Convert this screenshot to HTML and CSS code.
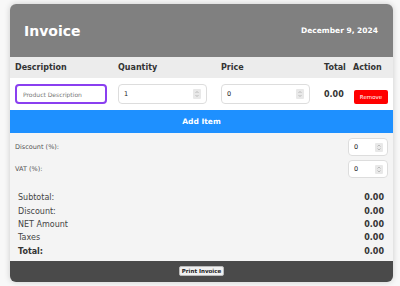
FILE: index.html
```
<!DOCTYPE html>
<html lang="en">
<head>
    <meta charset="UTF-8">
    <meta name="viewport" content="width=device-width, initial-scale=1.0">
    <title>Invoice</title>
    <link rel="stylesheet" href="styles.css">
</head>
<body>
    <div class="invoice">
        <div class="invoice-header">
            <h1>Invoice</h1>
            <div class="date">December 9, 2024</div>
        </div>

        <table class="items">
            <colgroup>
                <col class="col-desc">
                <col class="col-qty">
                <col class="col-price">
                <col class="col-total">
                <col class="col-action">
            </colgroup>
            <thead>
                <tr>
                    <th>Description</th>
                    <th>Quantity</th>
                    <th>Price</th>
                    <th class="num">Total</th>
                    <th>Action</th>
                </tr>
            </thead>
            <tbody>
                <tr>
                    <td><input type="text" class="desc-input" placeholder="Product Description"></td>
                    <td>
                        <span class="spin-wrap">
                            <input type="number" class="num-input" value="1" min="1">
                            <span class="spin"><svg viewBox="0 0 8 10"><path d="M2.5 4 4 2.5 5.5 4M2.5 6 4 7.5 5.5 6"/></svg></span>
                        </span>
                    </td>
                    <td>
                        <span class="spin-wrap">
                            <input type="number" class="num-input" value="0" min="0">
                            <span class="spin"><svg viewBox="0 0 8 10"><path d="M2.5 4 4 2.5 5.5 4M2.5 6 4 7.5 5.5 6"/></svg></span>
                        </span>
                    </td>
                    <td class="num line-total">0.00</td>
                    <td><button class="remove">Remove</button></td>
                </tr>
            </tbody>
        </table>

        <button class="add-item">Add Item</button>

        <div class="rates">
            <div class="rate">
                <label for="discount">Discount (%):</label>
                <span class="spin-wrap">
                    <input type="number" id="discount" class="rate-input" value="0">
                    <span class="spin small"><svg viewBox="0 0 8 9"><path d="M2.5 3.5 4 2 5.5 3.5M2.5 5.5 4 7 5.5 5.5"/></svg></span>
                </span>
            </div>
            <div class="rate">
                <label for="vat">VAT (%):</label>
                <span class="spin-wrap">
                    <input type="number" id="vat" class="rate-input" value="0">
                    <span class="spin small"><svg viewBox="0 0 8 9"><path d="M2.5 3.5 4 2 5.5 3.5M2.5 5.5 4 7 5.5 5.5"/></svg></span>
                </span>
            </div>
        </div>

        <div class="summary">
            <div class="summary-row"><span>Subtotal:</span><b>0.00</b></div>
            <div class="summary-row"><span>Discount:</span><b>0.00</b></div>
            <div class="summary-row"><span>NET Amount</span><b>0.00</b></div>
            <div class="summary-row"><span>Taxes</span><b>0.00</b></div>
            <div class="summary-row total"><span>Total:</span><b>0.00</b></div>
        </div>

        <div class="invoice-footer">
            <button class="print" onclick="window.print()">Print Invoice</button>
        </div>
    </div>
</body>
</html>
```

FILE: styles.css
```
* {margin: 0; padding: 0; box-sizing: border-box;}
body {
    font-family: "DejaVu Sans", Verdana, sans-serif;
    background: #f8f8f8;
    padding: 4px 7px 4px 10px;
    color: #333;
}
.invoice {
    width: 383px;
    background: #f4f4f4;
    border-radius: 6px;
    box-shadow: 0 0 6px rgba(0,0,0,0.18);
    overflow: hidden;
}
.invoice-header {
    background: #808080;
    color: white;
    height: 53px;
    padding: 0 15px 0 14px;
    display: flex;
    align-items: center;
    justify-content: space-between;
}
.invoice-header h1 {font-size: 14px; font-weight: bold; margin-top: 1px;}
.date {font-size: 7.5px; font-weight: bold;}

.items {width: 100%; border-collapse: collapse; table-layout: fixed;}
.col-desc, .col-qty, .col-price {width: 103px;}
.col-total {width: 29px;}
.col-action {width: 45px;}
.items th {
    background: #ececec;
    height: 21px;
    padding: 0 5px;
    font-size: 8px;
    text-align: left;
    color: #333;
}
.items td {background: white; height: 32px; padding: 0 5px;}
.items .num {text-align: right;}
.line-total {font-size: 8px; font-weight: bold;}
input {font-family: inherit; color: #222;}
input[type="number"] {-moz-appearance: textfield;}
input::-webkit-inner-spin-button, input::-webkit-outer-spin-button {-webkit-appearance: none; margin: 0;}
.spin-wrap {position: relative; display: inline-block; vertical-align: middle;}
.spin {
    position: absolute;
    right: 6px;
    top: 5px;
    width: 8px;
    height: 10px;
    background: #e8e8e8;
    border-radius: 1px;
}
.spin.small {top: 5px; right: 5px; height: 9px;}
.spin svg {display: block; width: 100%; height: 100%; fill: none; stroke: #9a9a9a; stroke-width: 0.6;}
.desc-input {
    width: 92px;
    height: 20px;
    border: 2px solid #8a3ff0;
    border-radius: 4px;
    padding: 0 6px;
    font-size: 6px;
    outline: none;
    vertical-align: middle;
}
.desc-input::placeholder {color: #777;}
.num-input {
    display: block;
    width: 89px;
    height: 20px;
    border: 1px solid #ddd;
    border-radius: 4px;
    padding: 0 16px 0 5px;
    font-size: 6.5px;
}
.remove {
    background: #ff0000;
    color: white;
    border: none;
    border-radius: 2px;
    width: 34px;
    height: 14px;
    margin-left: 1px;
    font-family: inherit;
    font-size: 5.5px;
    cursor: pointer;
}
.add-item {
    display: block;
    width: 100%;
    height: 23px;
    background: #1e90ff;
    color: white;
    border: none;
    font-family: inherit;
    font-size: 7.5px;
    font-weight: bold;
    cursor: pointer;
}
.rates {padding: 5px; display: flex; flex-direction: column; gap: 4px;}
.rate {display: flex; justify-content: space-between; align-items: center;}
.rate label {font-size: 6.5px; color: #555;}
.rate-input {
    display: block;
    width: 40px;
    height: 18px;
    border: 1px solid #ddd;
    border-radius: 4px;
    padding: 0 14px 0 5px;
    font-size: 6.5px;
    background: white;
}
.summary {padding: 8px 9px 3px 8px;}
.summary-row {
    display: flex;
    justify-content: space-between;
    height: 13.4px;
    align-items: center;
    font-size: 8px;
    color: #444;
}
.summary-row b {color: #333;}
.summary-row.total span {font-weight: bold; color: #333;}
.invoice-footer {
    background: #4a4a4a;
    height: 21px;
    display: flex;
    justify-content: center;
    align-items: center;
}
.print {
    background: #f0f0f0;
    border: 1px solid #bbb;
    border-radius: 2px;
    height: 10px;
    padding: 0 2px;
    font-family: inherit;
    font-size: 5.5px;
    font-weight: bold;
    color: #222;
    cursor: pointer;
}
```
